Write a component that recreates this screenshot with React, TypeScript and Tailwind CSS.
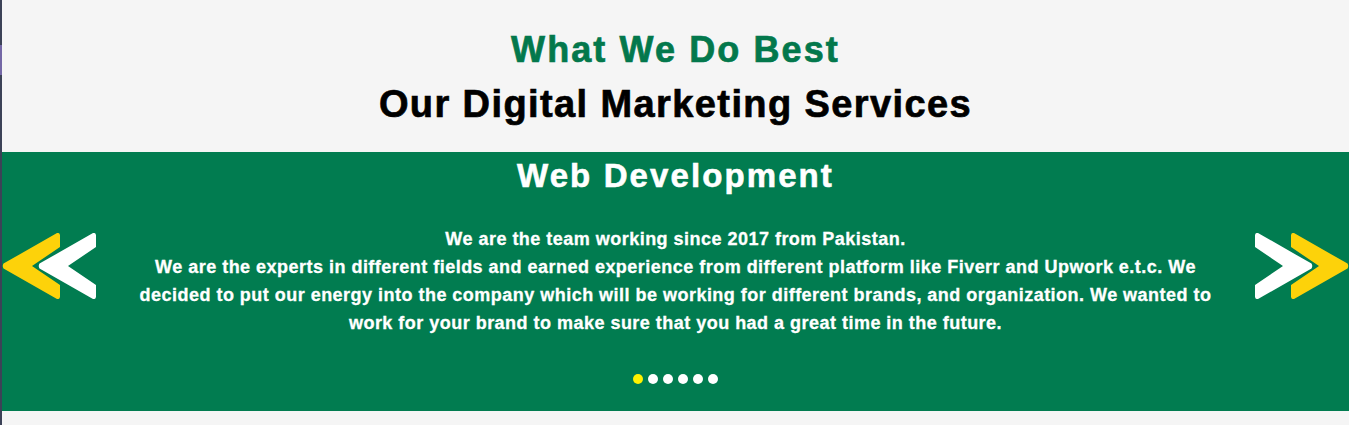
const font = { fontFamily: '"Liberation Sans", Arial, Helvetica, sans-serif' };

function Chevron({ color, flip }: { color: string; flip?: boolean }) {
  return (
    <svg
      width="58"
      height="66"
      viewBox="0 0 58 66"
      className={flip ? "-scale-x-100" : ""}
    >
      <path
        d="M3 0 L56.5 30.6 Q58 33 56.5 35.4 L3 66 Q0 66.5 0 63.5 L0 52 L28 33 L0 14 L0 2.5 Q0 -0.5 3 0 Z"
        fill={color}
      />
    </svg>
  );
}

function Arrows({ dir }: { dir: "left" | "right" }) {
  const left = dir === "left";
  return (
    <div className="relative w-[94px] h-[66px] shrink-0 mt-[81px]">
      <div className={`absolute top-0 ${left ? "left-0" : "right-0"}`}>
        <Chevron color="#fdd20a" flip={left} />
      </div>
      <div className={`absolute top-0 ${left ? "left-[36px]" : "right-[36px]"}`}>
        <Chevron color="#ffffff" flip={left} />
      </div>
    </div>
  );
}

export default function App() {
  const dots = [0, 1, 2, 3, 4, 5];
  return (
    <div className="flex w-full h-[425px] bg-[#f5f5f5]" style={font}>
      {/* window edge */}
      <div className="w-[2px] shrink-0 flex flex-col bg-[#3c4257]">
        <div className="h-[45px]" />
        <div className="h-[30px] bg-[#7468a6]" />
      </div>

      <div className="flex-1 flex flex-col">
        <section className="h-[152px] flex flex-col items-center pt-[30px]">
          <h2 className="text-[36px] leading-[40px] font-bold tracking-[2.1px] text-[#03784c] [-webkit-text-stroke:0.7px_#03784c]">
            What We Do Best
          </h2>
          <h1 className="mt-[12px] text-[38px] leading-[44px] font-bold tracking-[1.4px] text-black [-webkit-text-stroke:0.7px_#000]">
            Our Digital Marketing Services
          </h1>
        </section>

        <section className="h-[259px] bg-[#017c50] flex justify-between">
          <Arrows dir="left" />

          <div className="flex-1 flex flex-col items-center pt-[6px]">
            <h3 className="text-[33px] leading-[36px] font-bold tracking-[2.1px] text-white [-webkit-text-stroke:0.6px_#fff]">
              Web Development
            </h3>
            <p className="mt-[31px] max-w-[1090px] text-center text-[18px] leading-[28px] font-bold tracking-[0.48px] text-white [-webkit-text-stroke:0.3px_#fff]">
              We are the team working since 2017 from Pakistan.
              <br />
              We are the experts in different fields and earned experience from
              different platform like Fiverr and Upwork e.t.c. We decided to put
              our energy into the company which will be working for different
              brands, and organization. We wanted to work for your brand to make
              sure that you had a great time in the future.
            </p>
            <div className="mt-[37px] flex gap-[5px]">
              {dots.map((d) => (
                <span
                  key={d}
                  className={`w-[10px] h-[10px] rounded-full ${d === 0 ? "bg-[#fff200]" : "bg-white"}`}
                />
              ))}
            </div>
          </div>

          <Arrows dir="right" />
        </section>
      </div>
    </div>
  );
}
